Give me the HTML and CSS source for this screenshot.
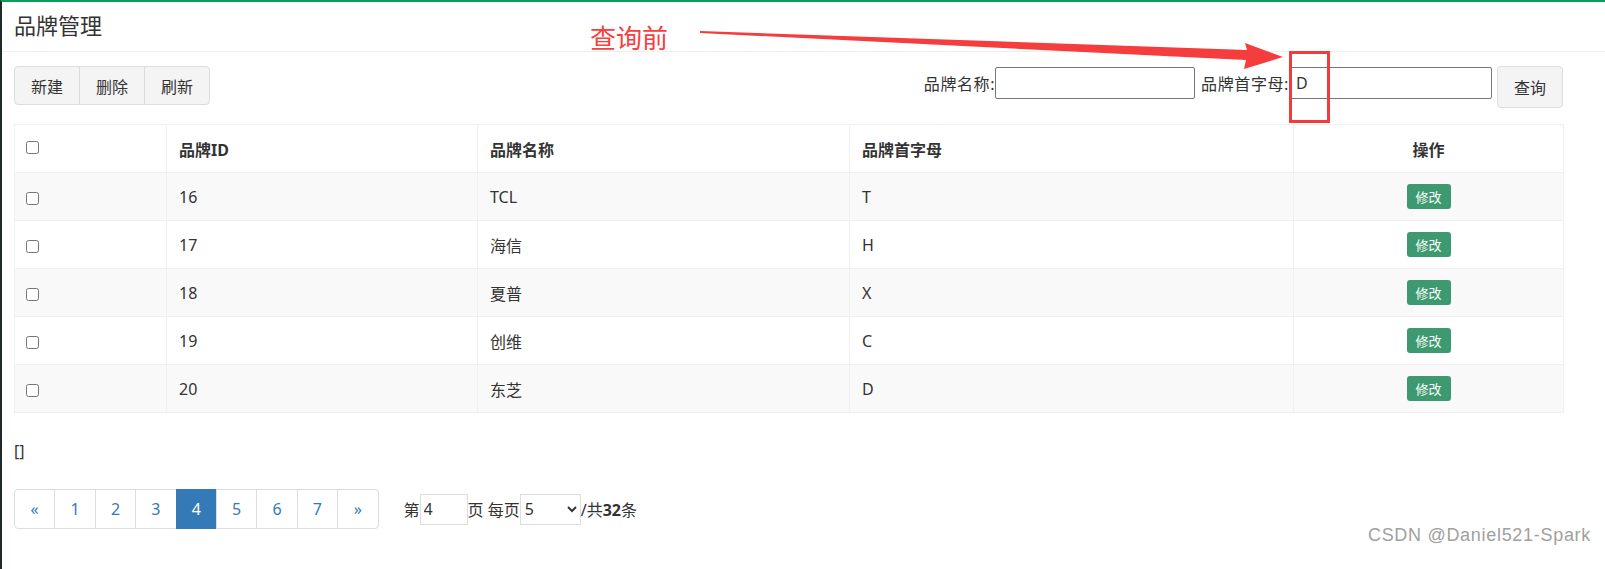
FILE: index.html
```html
<!DOCTYPE html>
<html lang="zh-CN">
<head>
    <meta charset="UTF-8">
    <meta name="viewport" content="width=device-width, initial-scale=1.0">
    <title>品牌管理</title>
    <link rel="stylesheet" href="styles.css">
</head>
<body>
    <div class="page">
        <div class="header">品牌管理</div>

        <div class="toolbar">
            <div class="btn-group">
                <button class="btn">新建</button>
                <button class="btn">删除</button>
                <button class="btn">刷新</button>
            </div>
            <div class="search-form">
                <label>品牌名称:</label>
                <input type="text" class="search-input">
                <label class="label-gap">品牌首字母:</label>
                <input type="text" class="search-input wide" value="D">
                <button class="btn query-btn">查询</button>
            </div>
        </div>

        <table class="brand-table">
            <colgroup>
                <col class="col-check">
                <col class="col-id">
                <col class="col-name">
                <col class="col-letter">
                <col class="col-op">
            </colgroup>
            <thead>
                <tr>
                    <th class="cell-check"><input type="checkbox"></th>
                    <th>品牌ID</th>
                    <th>品牌名称</th>
                    <th>品牌首字母</th>
                    <th class="cell-op">操作</th>
                </tr>
            </thead>
            <tbody>
                <tr>
                    <td class="cell-check"><input type="checkbox"></td>
                    <td>16</td>
                    <td>TCL</td>
                    <td>T</td>
                    <td class="cell-op"><button class="btn-edit">修改</button></td>
                </tr>
                <tr>
                    <td class="cell-check"><input type="checkbox"></td>
                    <td>17</td>
                    <td>海信</td>
                    <td>H</td>
                    <td class="cell-op"><button class="btn-edit">修改</button></td>
                </tr>
                <tr>
                    <td class="cell-check"><input type="checkbox"></td>
                    <td>18</td>
                    <td>夏普</td>
                    <td>X</td>
                    <td class="cell-op"><button class="btn-edit">修改</button></td>
                </tr>
                <tr>
                    <td class="cell-check"><input type="checkbox"></td>
                    <td>19</td>
                    <td>创维</td>
                    <td>C</td>
                    <td class="cell-op"><button class="btn-edit">修改</button></td>
                </tr>
                <tr>
                    <td class="cell-check"><input type="checkbox"></td>
                    <td>20</td>
                    <td>东芝</td>
                    <td>D</td>
                    <td class="cell-op"><button class="btn-edit">修改</button></td>
                </tr>
            </tbody>
        </table>

        <div class="selected">[]</div>

        <div class="pager-row">
            <ul class="pagination">
                <li><a href="#">&laquo;</a></li>
                <li><a href="#">1</a></li>
                <li><a href="#">2</a></li>
                <li><a href="#">3</a></li>
                <li class="active"><a href="#">4</a></li>
                <li><a href="#">5</a></li>
                <li><a href="#">6</a></li>
                <li><a href="#">7</a></li>
                <li><a href="#">&raquo;</a></li>
            </ul>
            <div class="pager-info">
                <span>第</span>
                <input type="text" class="page-input" value="4">
                <span>页 每页</span>
                <select class="page-size">
                    <option>5</option>
                    <option>10</option>
                    <option>20</option>
                </select>
                <span>/共<b>32</b>条</span>
            </div>
        </div>

        <!-- 标注 -->
        <div class="note-text">查询前</div>
        <svg class="note-arrow" width="1605" height="130" viewBox="0 0 1605 130">
            <polygon points="700,31 1247,50 1245,43 1283,57 1244,69 1246,60 700,33" fill="#f53d3d"/>
            <rect x="1290.5" y="52.5" width="38" height="69" fill="none" stroke="#f03c3c" stroke-width="3"/>
        </svg>

        <div class="watermark">CSDN @Daniel521-Spark</div>
    </div>
</body>
</html>
```

FILE: styles.css
```css
body {
    margin: 0;
    font-family: "Noto Sans", "Noto Sans CJK SC", sans-serif;
    font-size: 16px;
    color: #333;
    background-color: white;
}
.page {
    position: relative;
    height: 567px;
    border-top: 2px solid #0a9e5c;
    border-left: 2px solid #1e2a2a;
    overflow: hidden;
}
.header {
    height: 49px;
    line-height: 46px;
    padding-left: 12px;
    font-size: 22px;
    border-bottom: 1px solid #eee;
}
.toolbar {
    display: flex;
    justify-content: space-between;
    align-items: flex-start;
    margin-top: 14px;
    padding: 0 42px 0 12px;
}
.btn-group {
    display: flex;
}
.btn {
    font-family: inherit;
    font-size: 16px;
    color: #333;
    background-color: #f4f4f4;
    border: 1px solid #ddd;
    height: 39px;
    width: 66px;
    padding: 0;
    cursor: pointer;
}
.btn-group .btn + .btn {
    margin-left: -1px;
}
.btn-group .btn:first-child {
    border-radius: 4px 0 0 4px;
}
.btn-group .btn:last-child {
    border-radius: 0 4px 4px 0;
}
.search-form {
    display: flex;
    align-items: flex-start;
}
.search-form label {
    line-height: 36px;
    letter-spacing: 0.6px;
}
.label-gap {
    margin-left: 6px;
}
.search-input {
    font-family: inherit;
    font-size: 16px;
    color: #333;
    width: 200px;
    height: 32px;
    box-sizing: border-box;
    margin-top: 1px;
    padding: 0 6px;
    border: 1px solid #767676;
    border-radius: 2px;
}
.search-input.wide {
    width: 203px;
}
.query-btn {
    margin-left: 5px;
    height: 42px;
    border-radius: 4px;
}
.brand-table {
    margin: 16px 0 0 12px;
    width: 1549px;
    table-layout: fixed;
    border-collapse: collapse;
    border: 1px solid #eee;
}
.col-check {
    width: 152px;
}
.col-id {
    width: 311px;
}
.col-name {
    width: 372px;
}
.col-letter {
    width: 444px;
}
.col-op {
    width: 270px;
}
.brand-table th,
.brand-table td {
    height: 47px;
    padding: 0 12px;
    text-align: left;
    vertical-align: middle;
    border: 1px solid #f0f0f0;
}
.brand-table th {
    font-weight: bold;
}
.brand-table tbody tr:nth-child(odd) {
    background-color: #f9f9f9;
}
.brand-table .cell-check {
    padding-left: 11px;
}
.brand-table input[type="checkbox"] {
    margin: 0;
    width: 13px;
    height: 13px;
    vertical-align: middle;
}
.brand-table th.cell-check input {
    position: relative;
    top: -3px;
}
.brand-table .cell-op {
    text-align: center;
}
.btn-edit {
    font-family: inherit;
    font-size: 13px;
    color: white;
    background-color: #3d9a70;
    border: none;
    border-radius: 3px;
    height: 25px;
    width: 44px;
    padding: 0;
    cursor: pointer;
}
.selected {
    margin: 26px 0 0 12px;
    line-height: 24px;
}
.pager-row {
    display: flex;
    align-items: center;
    margin: 26px 0 0 12px;
}
.pagination {
    display: flex;
    list-style: none;
    margin: 0;
    padding: 0;
}
.pagination li a {
    display: block;
    width: 41.4px;
    height: 40px;
    box-sizing: border-box;
    line-height: 38px;
    text-align: center;
    color: #337ab7;
    text-decoration: none;
    border: 1px solid #ddd;
    margin-left: -1px;
}
.pagination li:first-child a {
    margin-left: 0;
    border-radius: 4px 0 0 4px;
}
.pagination li:last-child a {
    border-radius: 0 4px 4px 0;
}
.pagination li.active a {
    background-color: #337ab7;
    border-color: #337ab7;
    color: white;
}
.pager-info {
    display: flex;
    align-items: center;
    margin-left: 25px;
}
.page-input {
    font-family: inherit;
    font-size: 16px;
    color: #333;
    width: 48px;
    height: 31px;
    box-sizing: border-box;
    padding: 0 3px;
    border: 1px solid #ddd;
}
.page-size {
    font-family: inherit;
    font-size: 16px;
    color: #333;
    width: 61px;
    height: 31px;
    border: 1px solid #ddd;
    background-color: white;
}
.note-text {
    position: absolute;
    left: 588px;
    top: 18px;
    font-size: 26px;
    color: #f5403f;
    line-height: 36px;
}
.note-arrow {
    position: absolute;
    left: -2px;
    top: -2px;
}
.watermark {
    position: absolute;
    right: 14px;
    top: 523px;
    font-family: "Liberation Sans", sans-serif;
    font-size: 18px;
    letter-spacing: 0.7px;
    color: #a0a0a0;
    text-shadow: 1px 1px 0 white;
}
```
